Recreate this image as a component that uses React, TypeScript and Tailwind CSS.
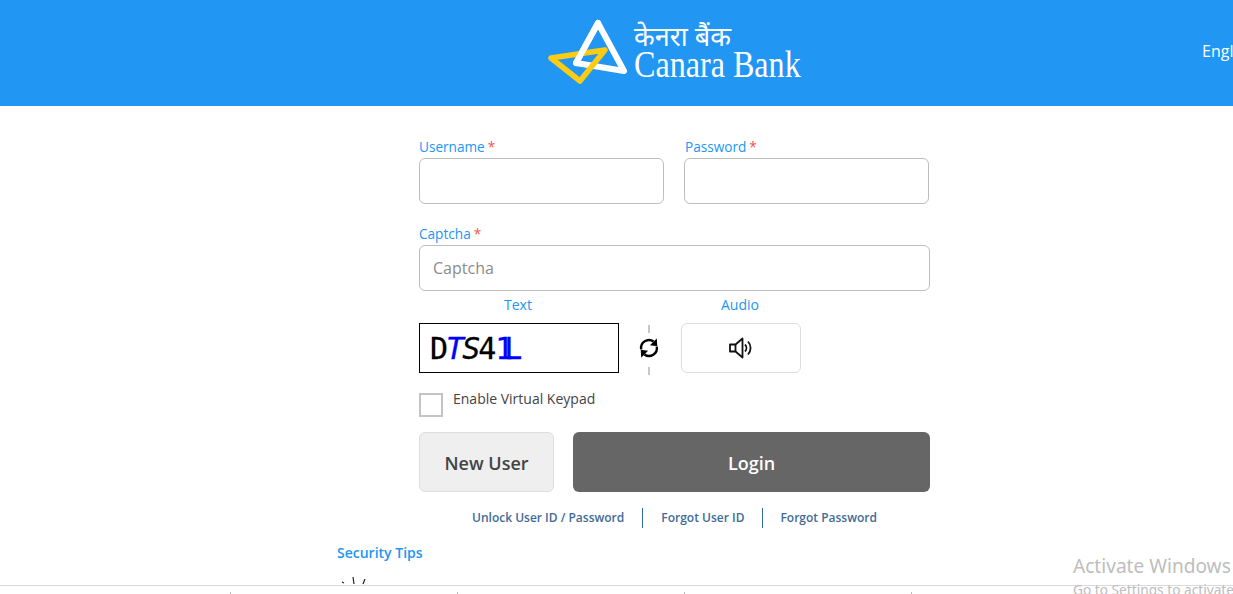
import React from 'react';

const Label = ({ text, required }: { text: string; required?: boolean }) => (
  <label className="block text-[13.6px] leading-[19px] text-[#2196f3]">
    {text}
    {required && <span className="ml-[3px] text-[#ef5350]">*</span>}
  </label>
);

const Logo = () => (
  <div className="flex items-start shrink-0 w-[254px] h-[70px]">
    <svg width="86" height="70" viewBox="0 0 86 70" className="shrink-0" fill="none">
      <path d="M51 5 L77 53 L29 45 Z" stroke="#ffffff" strokeWidth="6" strokeLinejoin="round" />
      <path d="M4 40 L58 32 L33 63 Z" stroke="#fccb14" strokeWidth="5.5" strokeLinejoin="round" />
      <path d="M51 5 L29 45" stroke="#ffffff" strokeWidth="6" strokeLinecap="round" />
    </svg>
    <div className="ml-[1px] mt-[3px] text-white">
      <div className="text-[27px] leading-[30px] font-['Noto_Sans',serif]">केनरा बैंक</div>
      <div className="-mt-[2px] origin-left scale-x-[0.845] whitespace-nowrap text-[38px] leading-[30px] font-['Liberation_Serif',serif]">
        Canara Bank
      </div>
    </div>
  </div>
);

const RefreshIcon = () => (
  <svg width="22" height="22" viewBox="0 0 24 24" fill="none" className="mb-[4px] text-black">
    <path d="M3.5 13.5 A8.6 8.6 0 0 1 17 5" stroke="currentColor" strokeWidth="2.6" />
    <path d="M20.5 1.5 L21 10 L13 9 Z" fill="currentColor" />
    <path d="M20.5 10.5 A8.6 8.6 0 0 1 7 19" stroke="currentColor" strokeWidth="2.6" />
    <path d="M3.5 22.5 L3 14 L11 15 Z" fill="currentColor" />
  </svg>
);

const SpeakerIcon = () => (
  <svg width="24" height="24" viewBox="0 0 24 24" fill="none" stroke="#111111" strokeWidth="1.8">
    <path d="M1 8.5 H6.5 L13.5 2.5 V21.5 L6.5 15.5 H1 Z" strokeLinejoin="round" />
    <path d="M6.5 8.5 V15.5" />
    <path d="M16 8.5 A5 5 0 0 1 16 15.5" />
    <path d="M19 5.5 A9.5 9.5 0 0 1 19 18.5" />
  </svg>
);

export default function App() {
  return (
    <div className="relative h-[594px] overflow-hidden bg-white font-['Open_Sans',sans-serif]">
      <header className="flex h-[106px] items-center overflow-hidden bg-[#2196f3] pl-[547px]">
        <Logo />
        <span className="ml-[401px] -mt-[4px] shrink-0 text-base text-white">English</span>
      </header>

      <main className="ml-[419px] w-[511px] pt-[31px]">
        <div className="flex gap-5">
          <div className="w-[245px]">
            <Label text="Username" required />
            <input className="mt-[2px] h-[46px] w-full rounded-md border border-[#bdbdbd] px-3" />
          </div>
          <div className="w-[245px]">
            <div className="pl-px">
              <Label text="Password" required />
            </div>
            <input className="mt-[2px] h-[46px] w-full rounded-md border border-[#bdbdbd] px-3" />
          </div>
        </div>

        <div className="mt-[20px]">
          <Label text="Captcha" required />
          <input
            placeholder="Captcha"
            className="mt-[2px] h-[46px] w-full rounded-md border border-[#bdbdbd] px-[13px] text-base placeholder:text-[#8c8c8c]"
          />
        </div>

        <div className="mt-[4px] flex text-sm leading-[19px] text-[#2196f3]">
          <span className="w-[198px] text-center">Text</span>
          <span className="ml-[64px] w-[118px] text-center">Audio</span>
        </div>

        <div className="mt-[9px] flex h-[50px] items-center">
          <div className="flex h-[50px] w-[200px] items-center whitespace-nowrap border border-black pl-[10px] pt-[2px] font-['DejaVu_Sans_Mono',monospace] text-[30px] leading-none [-webkit-text-stroke-width:0.3px]">
            <span className="tracking-[-2px] text-black">D</span>
            <span className="tracking-[-2px] italic text-[#0000ff]">T</span>
            <span className="tracking-[-2px] italic text-black">S</span>
            <span className="tracking-[-1px] text-black">4</span>
            <span className="tracking-[-9px] text-[#0000ff]">1</span>
            <span className="text-[#0000ff]">L</span>
          </div>
          <div className="mt-[4px] flex h-[50px] w-[62px] flex-col items-center justify-between pr-[2px]">
            <span className="h-[8px] w-[2px] bg-[#c8c8c8]" />
            <RefreshIcon />
            <span className="h-[8px] w-[2px] bg-[#c8c8c8]" />
          </div>
          <button className="flex h-[50px] w-[120px] items-center justify-center rounded-md border border-[#dddddd]">
            <SpeakerIcon />
          </button>
        </div>

        <div className="mt-[20px] flex items-start">
          <span className="h-[24px] w-[24px] border-2 border-[#c4c4c4]" />
          <span className="ml-[10px] -mt-[4px] text-sm leading-[19px] text-[#444444]">Enable Virtual Keypad</span>
        </div>

        <div className="mt-[15px] flex gap-[19px]">
          <button className="h-[60px] w-[135px] rounded-md border border-[#dddddd] bg-[#efefef] pt-px text-lg font-semibold text-[#444444]">
            New User
          </button>
          <button className="h-[60px] w-[357px] rounded-md bg-[#666666] pt-px text-lg font-semibold text-white">
            Login
          </button>
        </div>

        <div className="mt-[15px] flex h-[20px] items-center pl-[53px] pt-px text-xs font-semibold text-[#3f6b98]">
          <span className="pr-[18px]">Unlock User ID / Password</span>
          <span className="h-[20px] border-l border-[#2f6da3] pl-[18px] pr-[18px] leading-[20px]">Forgot User ID</span>
          <span className="h-[20px] border-l border-[#2f6da3] pl-[17px] leading-[20px]">Forgot Password</span>
        </div>
      </main>

      <section className="ml-[337px] mt-[16px]">
        <h3 className="text-sm font-semibold leading-[19px] text-[#2196f3]">Security Tips</h3>
        <svg width="40" height="10" viewBox="0 0 40 10" className="mt-[13px]" fill="none" stroke="#222222" strokeWidth="1.2">
          <path d="M5 7 L7 8 M16 2 L17 9 M28 4 L26 9" />
        </svg>
      </section>

      <footer className="absolute inset-x-0 bottom-0 flex h-[9px] border-t border-[#d9d9d9] bg-white pl-[230px]">
        <span className="mt-[6px] h-[2px] w-[227px] border-l border-[#bbbbbb]" />
        <span className="mt-[6px] h-[2px] w-[227px] border-l border-[#bbbbbb]" />
        <span className="mt-[6px] h-[2px] w-[227px] border-l border-[#bbbbbb]" />
        <span className="mt-[6px] h-[2px] w-[227px] border-l border-[#bbbbbb]" />
      </footer>

      <div className="pointer-events-none absolute left-[1073px] top-[553px] whitespace-nowrap font-['Noto_Sans',sans-serif] text-[#bdbdbd]">
        <div className="text-[19.1px] leading-[27px]">Activate Windows</div>
        <div className="text-[13.7px] leading-[19px]">Go to Settings to activate Windows.</div>
      </div>
    </div>
  );
}
